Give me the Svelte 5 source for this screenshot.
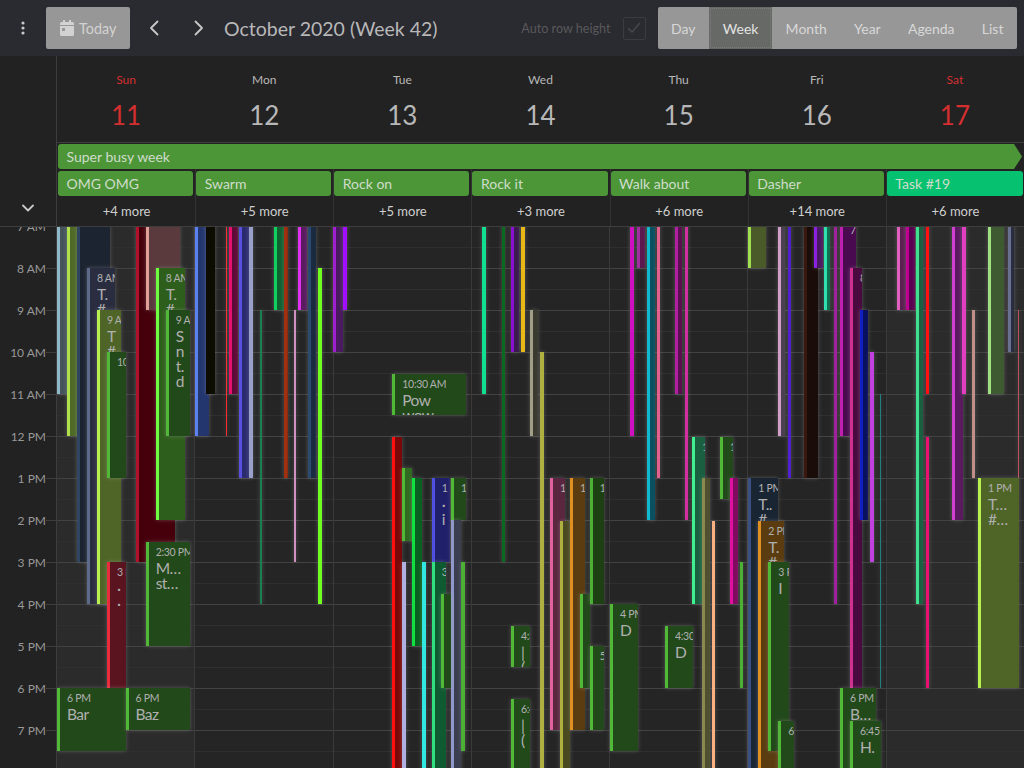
<script>
  const days = [
    { name: 'Sun', num: 11, off: true, chip: 'OMG OMG', more: '+4 more' },
    { name: 'Mon', num: 12, chip: 'Swarm', more: '+5 more' },
    { name: 'Tue', num: 13, chip: 'Rock on', more: '+5 more' },
    { name: 'Wed', num: 14, chip: 'Rock it', more: '+3 more' },
    { name: 'Thu', num: 15, chip: 'Walk about', more: '+6 more' },
    { name: 'Fri', num: 16, chip: 'Dasher', more: '+14 more' },
    { name: 'Sat', num: 17, off: true, chip: 'Task #19', more: '+6 more', teal: true }
  ];

  const views = ['Day', 'Week', 'Month', 'Year', 'Agenda', 'List'];
  const hours = ['7 AM', '8 AM', '9 AM', '10 AM', '11 AM', '12 PM', '1 PM', '2 PM', '3 PM', '4 PM', '5 PM', '6 PM', '7 PM', '8 PM'];
  const slots = Array.from({ length: 30 }, (_, i) => i);

  const G = '#52b838', GB = '#22491a';

  // [left, right, top, bottom, bar colour, body colour, time, title lines] in page pixels
  const events = [
    // Sun
    [57, 67, 220, 394, '#8fb8c8', '#45535a'],
    [67, 77, 220, 436, '#b0e04c', '#4f6a26'],
    [77, 110, 220, 562, '#2f4562', '#1b2430'],
    [87, 115, 268, 604, '#5e6a8a', '#2a2d40', '8 AM', ['T.', '#']],
    [97, 120.5, 310, 604, '#b8f050', '#4f6528', '9 AM', ['T', '#']],
    [107, 126, 352, 478, G, GB, '10 AM'],
    [107, 126, 562, 688, '#e82c3c', '#5a1420', '3 PM', ['·', '·']],
    [135.5, 174.5, 220, 562, '#b0102a', '#45000c'],
    [145.7, 180, 220, 310, '#e0a098', '#5a3a3c'],
    [155.7, 184.6, 268, 520, '#70ff40', '#2e5e1c', '8 AM', ['T.', '#']],
    [165.7, 190, 310, 436, G, GB, '9 AM', ['S', 'n', 't.', 'd']],
    [145.7, 190, 541.5, 646, G, GB, '2:30 PM', ['M…', 'st…']],
    [57, 126, 688, 751, G, GB, '6 PM', ['Bar']],
    [125.5, 190, 688, 730, G, GB, '6 PM', ['Baz']],
    // Mon
    [195.3, 209, 220, 436, '#5b80f0', '#24366e'],
    [205.7, 215, 220, 394, '#0c0c00', '#0c0c00'],
    [225.7, 227.5, 220, 436, '#ff2a30', '#ff2a30'],
    [229, 238, 220, 394, '#e8106e', '#5e0a36'],
    [239.3, 249, 220, 478, '#5a50e0', '#2a2a70'],
    [249, 253, 220, 478, '#9aa0cc', '#9aa0cc'],
    [259.7, 262, 310, 604, '#1a8050', '#1a8050'],
    [274, 284, 220, 310, '#10d060', '#106030'],
    [283.7, 288, 220, 478, '#a03010', '#8a2a10'],
    [294, 295.5, 310, 562, '#d090c0', '#d090c0'],
    [297.7, 307, 220, 310, '#e030f0', '#5a1a60'],
    [307.7, 316, 220, 478, '#2a4a70', '#1a2a40'],
    [317.7, 322, 268, 604, '#70ff20', '#70ff20'],
    // Tue
    [333, 343, 220, 352, '#a020d0', '#4a1a60'],
    [343, 347, 220, 310, '#a010ff', '#a010ff'],
    [392.3, 466, 374, 415, G, GB, '10:30 AM', ['Pow', 'wow']],
    [392.3, 402, 436.6, 790, '#ff1010', '#7a0808'],
    [402.3, 412, 468, 541, G, '#2f6a20'],
    [412, 422, 478, 646, '#10e040', '#0a6020'],
    [402.3, 406, 562, 790, '#b0b0e0', '#b0b0e0'],
    [422, 426, 562, 790, '#30e8e0', '#30e8e0'],
    [431.7, 450, 478, 562, '#5050e0', '#20206a', '1 PM', ['·', 'i']],
    [431.7, 446, 562, 790, '#30e080', '#0f5a30', '3 PM'],
    [451, 466, 478, 520, G, GB, '1 PM'],
    [451, 461, 520, 790, '#9098c8', '#3a3e50'],
    [441, 451, 594, 688, G, GB],
    [461, 465, 562, 751, '#4cb035', '#4cb035'],
    // Wed
    [482, 486, 220, 394, '#10e090', '#10e090'],
    [501.5, 505, 220, 562, '#0a6a20', '#0a6a20'],
    [510.7, 519, 220, 352, '#8a10d0', '#3a1a50'],
    [521, 525, 220, 352, '#e8b818', '#e8b818'],
    [530.3, 538, 310, 436, '#a0a088', '#3a3a30'],
    [540.3, 544.5, 352, 790, '#b0b040', '#b0b040'],
    [550, 565, 478, 730, '#e060a0', '#5a2640', '1 PM'],
    [560, 570, 521, 790, '#b0b040', '#4a4a20'],
    [570, 585, 478, 730, '#e09020', '#5a3c10', '1 PM'],
    [580, 590, 594, 688, G, GB],
    [589.7, 604, 478, 604, '#4cb035', '#1c4012', '1 PM'],
    [589.7, 604, 646, 730, G, GB, '5 PM'],
    [511, 530, 626, 667, G, GB, '4:30', ['|', '(']],
    [511, 530, 699, 790, G, GB, '6:45', ['|', '(']],
    // Thu
    [610, 638, 604, 751, G, GB, '4 PM', ['D']],
    [665, 692.5, 626, 688, G, GB, '4:30 PM', ['D']],
    [630, 633.5, 220, 436, '#d010c0', '#d010c0'],
    [637.3, 645, 220, 268, '#a030a0', '#5a1a50'],
    [647.3, 655, 220, 520, '#10b8d0', '#0a5060'],
    [657.3, 660.5, 220, 478, '#e06090', '#e06090'],
    [675, 682, 220, 394, '#b020a0', '#5a1050'],
    [685, 688, 220, 520, '#d030a0', '#d030a0'],
    [692.3, 705, 436.6, 604, '#40f090', '#1a6040', '12 PM'],
    [702.3, 710, 478, 790, '#8a8a50', '#505030'],
    [712.3, 715, 521, 790, '#ffb080', '#ffb080'],
    [720, 732.5, 436.6, 499, G, GB, '12 PM'],
    [730, 737.5, 478, 604, '#e010a0', '#800a60'],
    [740, 743, 562, 688, '#4cb035', '#4cb035'],
    // Fri
    [748.3, 766, 220, 268, '#a0e050', '#4a5a28'],
    [778.3, 785, 220, 436, '#d0a0c8', '#4a4050'],
    [788.3, 791, 220, 478, '#5020d0', '#5020d0'],
    [804, 818, 220, 478, '#3a1810', '#1a0c08'],
    [814, 823, 220, 268, '#8a20e0', '#4a1a60'],
    [824, 830, 220, 310, '#30e0b0', '#107050'],
    [834, 836.5, 220, 604, '#a020a0', '#a020a0'],
    [840, 856, 220, 436, '#c020b0', '#4a0a50', '7 AM'],
    [850, 862, 268, 688, '#d03090', '#4a0a40', '8 AM'],
    [860, 868, 310, 520, '#1020c0', '#0a1060'],
    [870, 874, 352, 562, '#c040e0', '#c040e0'],
    [880, 881, 394, 688, '#208080', '#208080'],
    [748.3, 778, 478, 790, '#3a5080', '#1a2534', '1 PM', ['T..', '#']],
    [758.3, 784, 521, 790, '#e09020', '#5a3c10', '2 PM', ['T.', '#']],
    [768.3, 789, 562, 751, G, GB, '3 PM', ['I']],
    [778.3, 794, 720.7, 790, G, GB, '6:45 PM'],
    [840, 876, 688, 790, G, GB, '6 PM', ['B…']],
    [850, 881, 721, 790, G, GB, '6:45', ['H.']],
    // Sat
    [896.7, 906, 220, 310, '#e060c0', '#5a2050'],
    [906, 915, 220, 310, '#c00090', '#5a0050'],
    [916, 923, 220, 604, '#40e090', '#1a6040'],
    [926, 929, 220, 394, '#ff1010', '#ff1010'],
    [926, 929, 436.6, 688, '#e81070', '#e81070'],
    [952.3, 963, 220, 520, '#d040d0', '#5a1a60'],
    [962.3, 966, 220, 394, '#e040c0', '#e040c0'],
    [972.3, 975, 310, 478, '#c09088', '#c09088'],
    [988, 1004, 220, 394, '#a0e080', '#3e5a30'],
    [1008, 1014, 220, 352, '#6a7090', '#2a2d40'],
    [1018, 1019, 310, 478, '#c05060', '#c05060'],
    [978, 1019, 478, 688, '#b8f050', '#4f6528', '1 PM', ['T…', '#…']]
  ];
</script>

<div class="page">
  <header class="toolbar">
    <button class="icon menu" aria-label="Menu">
      <svg width="4" height="14" viewBox="0 0 4 14"><circle cx="2" cy="2" r="1.6" /><circle cx="2" cy="7" r="1.6" /><circle cx="2" cy="12" r="1.6" /></svg>
    </button>
    <button class="today">
      <svg width="14" height="16" viewBox="0 0 14 16"><path d="M3 0h2v2h4V0h2v2h1.5A1.5 1.5 0 0 1 14 3.500V5H0V3.500A1.500 1.500 0 0 1 1.500 2H3zM0 6h14v8.500a1.500 1.500 0 0 1-1.500 1.500h-11A1.500 1.500 0 0 1 0 14.500zm2 2v3h3V8z" /></svg>
      Today
    </button>
    <button class="icon nav first" aria-label="Previous">
      <svg width="10" height="16" viewBox="0 0 10 16"><path d="M8.500 1.500 2 8l6.500 6.500" /></svg>
    </button>
    <button class="icon nav" aria-label="Next">
      <svg width="10" height="16" viewBox="0 0 10 16"><path d="M1.500 1.500 8 8l-6.500 6.500" /></svg>
    </button>
    <h1>October 2020 (Week 42)</h1>
    <span class="auto">Auto row height</span>
    <span class="check">
      <svg width="14" height="12" viewBox="0 0 14 12"><path d="M1.500 6.500 5 10l7.500-8.500" /></svg>
    </span>
    <div class="views">
      {#each views as v}
        <button class="view" class:active={v === 'Week'}>{v}</button>
      {/each}
    </div>
  </header>

  <section class="head">
    <div class="side">
      <svg width="12" height="8" viewBox="0 0 12 8"><path d="M1 1.500 6 6.500l5-5" /></svg>
    </div>
    <div class="head-main">
      <div class="titles">
        {#each days as d}
          <div class="title" class:off={d.off}>
            <span class="dname">{d.name}</span>
            <span class="dnum">{d.num}</span>
          </div>
        {/each}
      </div>
      <div class="span-row"><div class="span-bar">Super busy week</div></div>
      <div class="chips">
        {#each days as d}
          <div class="cell">
            <div class="chip" class:teal={d.teal}>{d.chip}</div>
            <div class="more">{d.more}</div>
          </div>
        {/each}
      </div>
    </div>
  </section>

  <main class="body">
    <div class="gutter">
      {#each hours as h}
        <div class="hour">{h}</div>
      {/each}
    </div>
    <div class="grid">
      <div class="cols">
        {#each days as d}
          <div class="col" class:off={d.off}>
            {#each slots as s}
              <div class="slot" class:major={s % 2 === 0}></div>
            {/each}
          </div>
        {/each}
      </div>
      {#each events as [l, r, t, b, bar, bg, time, lines]}
        <div class="event" style="left:{l - 57}px;width:{r - l}px;top:{t - 227}px;height:{b - t}px;background:{bg};border-left:{Math.min(r - l, 3.7)}px solid {bar}">
          {#if time}<div class="time">{time}</div>{/if}
          {#each lines || [] as line}<div class="line">{line}</div>{/each}
        </div>
      {/each}
    </div>
  </main>
</div>

<style>
  :global(body) {
    margin: 0;
    background: #222;
  }

  .page {
    width: 1024px;
    height: 768px;
    overflow: hidden;
    display: flex;
    flex-direction: column;
    font-family: Lato, "Open Sans", sans-serif;
    color: #b8b8b8;
  }

  button {
    font: inherit;
    border: 0;
    background: none;
    color: inherit;
    padding: 0;
  }

  /* toolbar */
  .toolbar {
    height: 56px;
    flex: none;
    display: flex;
    align-items: center;
    background: #2a2a31;
    padding: 0 7px 0 0;
    box-sizing: border-box;
  }

  .icon {
    display: flex;
    align-items: center;
    justify-content: center;
  }

  .menu {
    width: 45.500px;
  }

  .menu svg {
    fill: #c8c8c8;
  }

  .today {
    width: 84px;
    height: 42px;
    background: #979797;
    border-radius: 2px;
    color: #d2d2d2;
    font-size: 14.400px;
    display: flex;
    align-items: center;
    gap: 5.500px;
    padding-left: 14px;
    box-sizing: border-box;
  }

  .today svg {
    fill: #d2d2d2;
  }

  .nav {
    width: 45px;
  }

  .nav.first {
    margin-left: 2px;
  }

  .nav svg,
  .check svg,
  .side svg {
    fill: none;
    stroke: #c8c8c8;
    stroke-width: 1.800;
    stroke-linecap: round;
    stroke-linejoin: round;
  }

  .toolbar h1 {
    margin: 0 0 0 2.500px;
    font-size: 19.500px;
    font-weight: 400;
    color: #b8b8b8;
    flex: 1;
    white-space: nowrap;
  }

  .auto {
    font-size: 12.600px;
    color: #595959;
  }

  .check {
    width: 23px;
    height: 23px;
    border: 1px solid #3b3b40;
    border-radius: 2px;
    box-sizing: border-box;
    margin: 0 12px;
    display: flex;
    align-items: center;
    justify-content: center;
  }

  .check svg {
    stroke: #47474c;
    stroke-width: 1.500;
  }

  .views {
    display: flex;
    height: 42px;
    width: 359.500px;
    flex: none;
    background: #979797;
    border-radius: 2px;
  }

  .view {
    font-size: 14px;
    color: #d8d8d8;
    padding: 0 13.500px;
    flex: auto;
    white-space: nowrap;
  }

  .view.active {
    background: #676967;
    outline: 1px dotted #7c7c7c;
    outline-offset: -2px;
    color: #e2e2e2;
  }

  /* day header */
  .head {
    flex: none;
    height: 171px;
    display: flex;
    background: #222;
    border-bottom: 1px solid #3d3d3d;
    box-sizing: border-box;
  }

  .side {
    width: 57px;
    flex: none;
    box-sizing: border-box;
    border-right: 1px solid #3d3d3d;
    display: flex;
    align-items: flex-end;
    justify-content: center;
    padding: 0 0 14px 0;
  }

  .head-main {
    flex: 1;
    display: flex;
    flex-direction: column;
    min-width: 0;
  }

  .titles {
    height: 89px;
    display: flex;
    border-bottom: 1px solid #3d3d3d;
    box-sizing: border-box;
  }

  .title {
    flex: 1;
    display: flex;
    flex-direction: column;
    align-items: center;
    padding-top: 16px;
  }

  .title.off {
    color: #d32f2f;
  }

  .dname {
    font-size: 12px;
    line-height: 15px;
  }

  .dnum {
    font-size: 26px;
    line-height: 32px;
    margin-top: 12px;
  }

  .span-row {
    padding: 1px 0 0 1px;
  }

  .span-bar {
    height: 25px;
    line-height: 25px;
    background: #4c9637;
    color: #cfdccb;
    font-size: 14px;
    padding-left: 8.500px;
    border-radius: 3px 0 0 3px;
    margin-right: 2px;
    clip-path: polygon(0 0, calc(100% - 8px) 0, 100% 50%, calc(100% - 8px) 100%, 0 100%);
  }

  .chips {
    flex: 1;
    display: flex;
    margin-top: 0;
  }

  .cell {
    flex: 1;
    min-width: 0;
    border-left: 1px solid #333;
    box-sizing: border-box;
    padding-top: 2px;
  }

  .chip {
    height: 25px;
    line-height: 25px;
    margin: 0 2px 0 0;
    background: #4c9637;
    color: #cfdccb;
    font-size: 14px;
    padding-left: 8.500px;
    border-radius: 3px;
  }

  .cell:first-child {
    border-left: 0;
    padding-left: 1px;
  }

  .chip.teal {
    background: #06c270;
    margin-right: 1px;
  }

  .more {
    text-align: center;
    font-size: 13px;
    line-height: 30px;
    color: #cfcfcf;
  }

  /* time grid */
  .body {
    flex: 1;
    min-height: 0;
    display: flex;
    overflow: hidden;
  }

  .gutter {
    width: 57px;
    flex: none;
    box-sizing: border-box;
    border-right: 1px solid #3d3d3d;
    margin-top: -22px;
    background: #222;
  }

  .hour {
    height: 42px;
    line-height: 44px;
    font-size: 12px;
    color: #999;
    padding-right: 10px;
    box-sizing: border-box;
    text-align: right;
    position: relative;
  }

  .hour::after {
    content: '';
    position: absolute;
    right: 0;
    top: 21px;
    width: 10px;
    border-top: 1px solid #3d3d3d;
  }

  .grid {
    flex: 1;
    position: relative;
    overflow: hidden;
  }

  .cols {
    display: flex;
    margin-top: -1px;
  }

  .col {
    flex: 1;
    background: #252525;
    border-left: 1px solid #3a3a3a;
    box-sizing: border-box;
  }

  .col:first-child {
    border-left: 0;
  }

  .col.off {
    background: #2b2b2b;
  }

  .slot {
    height: 21px;
    box-sizing: border-box;
    border-top: 1px solid #2f2f2f;
  }

  .slot.major {
    border-top-color: #424242;
  }

  .event {
    position: absolute;
    box-sizing: border-box;
    padding-top: 3px;
    overflow: hidden;
    box-shadow: 0 0 4px rgba(190, 190, 190, 0.35);
    color: #b0b0b0;
    white-space: nowrap;
  }

  .time {
    font-size: 10.500px;
    line-height: 15px;
    letter-spacing: -0.3px;
    margin-left: 7px;
  }

  .line {
    font-size: 15.500px;
    line-height: 15px;
    letter-spacing: -0.6px;
    margin-left: 7px;
  }

  .time + .line {
    margin-top: 1px;
  }
</style>
